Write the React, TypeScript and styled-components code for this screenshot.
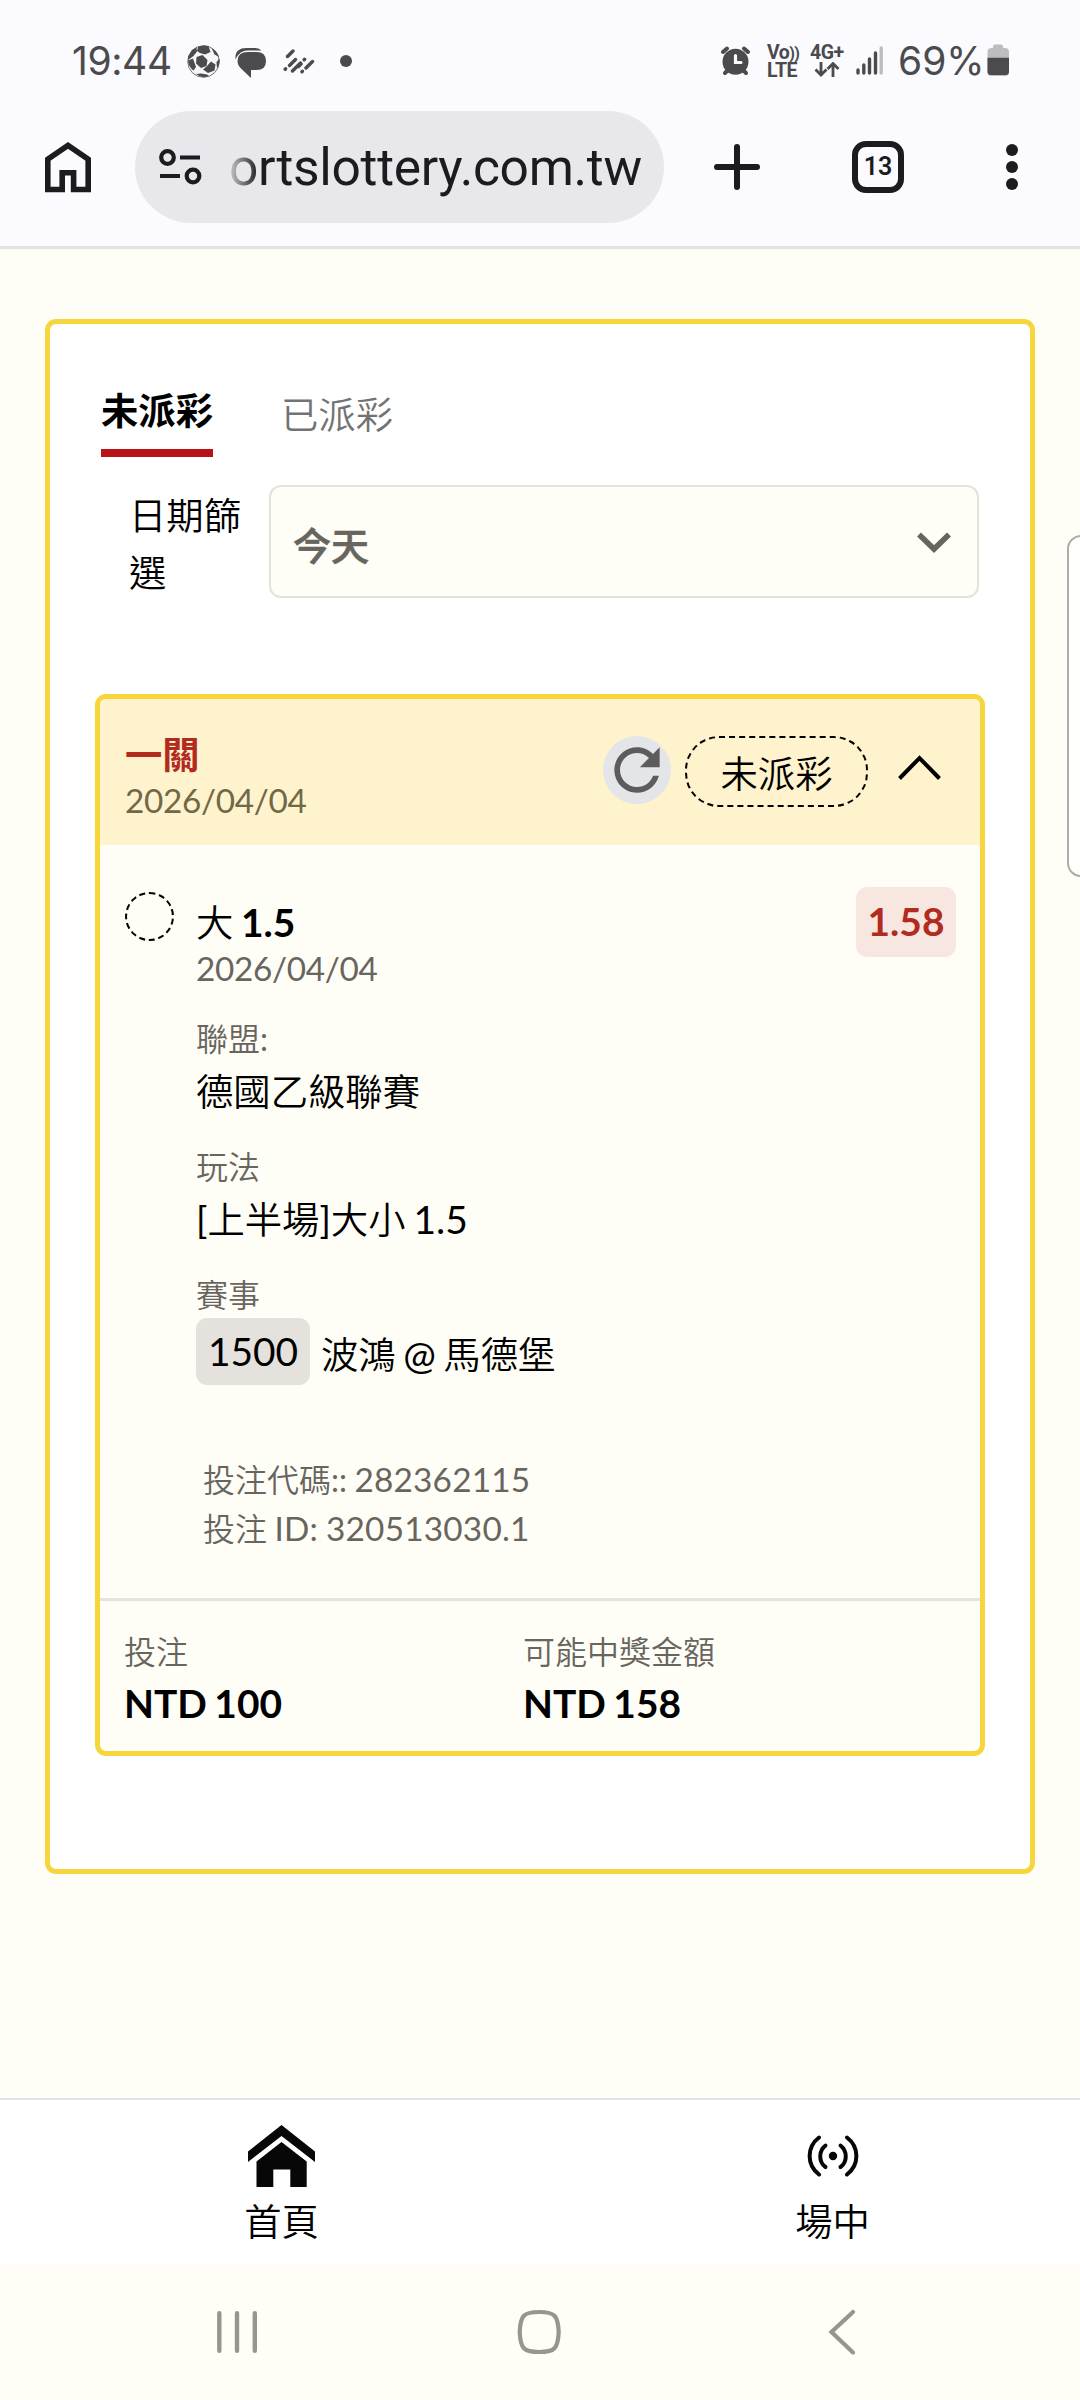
import React from "react";
import styled, { createGlobalStyle, css } from "styled-components";

const color = {
  page: "#fffef6",
  paper: "#ffffff",
  gold: "#f6d63c",
  cream: "#fff3cd",
  ink: "#000000",
  muted: "#68655f",
  red: "#b12b21",
  chrome: "#fafaff",
  chromeInk: "#1b1b20",
  status: "#4b4b4d",
};

const GlobalStyle = createGlobalStyle`
  * { box-sizing: border-box; }
  body {
    margin: 0;
    background: ${color.page};
    color: ${color.ink};
    font-family: Lato, "Noto Sans CJK TC DemiLight", "Noto Sans CJK TC", sans-serif;
    font-size: 37.33px;
  }
  svg { display: block; flex: none; }
`;

const Screen = styled.div`
  position: relative;
  display: flex;
  flex-direction: column;
  width: 1080px;
  height: 2400px;
  overflow: hidden;
`;

/* ---------- browser header ---------- */

const Header = styled.header`
  height: 249px;
  background: ${color.chrome};
  border-bottom: 3px solid #e3e3e5;
`;

const StatusBar = styled.div`
  display: flex;
  align-items: flex-start;
  height: 111px;
  padding: 40px 71px 0 72px;
  color: ${color.status};
  font-family: Roboto, sans-serif;
`;

const StatusText = styled.span<{ $w: number; $spacing?: number }>`
  width: ${(p) => p.$w}px;
  font-family: Inter, sans-serif;
  font-size: 39px;
  line-height: 41px;
  white-space: nowrap;
  letter-spacing: ${(p) => p.$spacing ?? 0}px;
`;

const StatusIcons = styled.div`
  display: flex;
  flex: 1;
`;

const NetworkLabel = styled.div<{ $w: number }>`
  display: flex;
  flex-direction: column;
  width: ${(p) => p.$w}px;
  padding-top: 4px;
  font-size: 19.5px;
  font-weight: 700;
  line-height: 18px;
  letter-spacing: -0.5px;
  white-space: nowrap;
`;

const Waves = styled.span`
  font-size: 16px;
  letter-spacing: -0.6px;
  line-height: 1;
`;

const Toolbar = styled.div`
  display: flex;
  align-items: center;
  height: 112px;
  padding-left: 45px;
  color: ${color.chromeInk};
`;

const AddressBar = styled.div`
  display: flex;
  align-items: center;
  width: 529px;
  height: 112px;
  margin: 0 50px 0 44px;
  padding-left: 24px;
  border-radius: 56px;
  background: #e8e7ec;
`;

const Url = styled.span`
  margin-left: 26px;
  padding-top: 2px;
  font-family: Roboto, sans-serif;
  font-size: 51.5px;
  letter-spacing: -0.3px;
  line-height: 60px;
  white-space: nowrap;
  background: linear-gradient(90deg, #c9c8cd 0, ${color.chromeInk} 30px);
  background-clip: text;
  -webkit-background-clip: text;
  color: transparent;
`;

const TabCount = styled.div`
  display: flex;
  align-items: center;
  justify-content: center;
  width: 52px;
  height: 52px;
  margin: 0 101px 0 92px;
  border: 6px solid ${color.chromeInk};
  border-radius: 14px;
  font: 600 25px/26px Roboto, sans-serif;
`;

/* ---------- bet record panel ---------- */

const Main = styled.main`
  flex: 1;
  padding: 70px 45px 0;
`;

const Panel = styled.section`
  padding: 58px 45px 113px;
  border: 5px solid ${color.gold};
  border-radius: 11px;
  background: ${color.paper};
`;

const Tabs = styled.div`
  display: flex;
  gap: 68px;
  height: 75px;
  padding-left: 6px;
`;

const Tab = styled.div<{ $active?: boolean }>`
  line-height: 56px;
  ${(p) =>
    p.$active
      ? css`
          height: 75px;
          border-bottom: 8px solid #b91318;
          font-family: "Noto Sans CJK TC", sans-serif;
          font-weight: 700;
          line-height: 55px;
        `
      : css`
          padding-top: 5px;
          color: #737373;
        `}
`;

const FilterRow = styled.div`
  display: flex;
  gap: 28px;
  height: 113px;
  margin: 28px 6px 96px 34px;
`;

const FilterLabel = styled.label`
  width: 112px;
  padding-top: 2px;
  line-height: 57px;
`;

const Select = styled.div`
  display: flex;
  flex: 1;
  align-items: center;
  justify-content: space-between;
  padding: 3px 26px 0 22px;
  border: 2px solid #e4e2da;
  border-radius: 12px;
  background: ${color.page};
  color: ${color.muted};
  font-family: "Noto Sans CJK TC Medium", "Noto Sans CJK TC", sans-serif;
  font-size: 38px;
  font-weight: 500;
  -webkit-text-stroke: 0.7px ${color.muted};
`;

const Ticket = styled.article`
  overflow: hidden;
  border: 5px solid ${color.gold};
  border-radius: 11px;
  background: ${color.page};
`;

const TicketHeader = styled.div`
  display: flex;
  justify-content: space-between;
  height: 146px;
  padding: 33px 39px 0 25px;
  background: ${color.cream};
`;

const TicketTitle = styled.div`
  height: 46px;
  color: ${color.red};
  font-family: "Noto Sans CJK TC", sans-serif;
  font-weight: 700;
  line-height: 43px;
`;

const DateText = styled.div`
  color: ${color.muted};
  font-size: 33.3px;
  letter-spacing: -0.3px;
  line-height: 44px;
`;

const HeaderDate = styled(DateText)`
  color: #716847;
`;

const TicketActions = styled.div`
  display: flex;
  align-items: flex-start;
  padding-top: 4px;
`;

const RefreshButton = styled.div`
  width: 68px;
  height: 68px;
  border-radius: 50%;
  background: #e4e5e9;
  color: #5c5c5d;
`;

const StatusPill = styled.div`
  width: 183px;
  height: 71px;
  margin: 0 30px 0 14px;
  padding-top: 3px;
  border: 2px dashed ${color.ink};
  border-radius: 34px;
  text-align: center;
  line-height: 66px;
`;

const ChevronSlot = styled.div`
  padding-top: 19px;
`;

const Selection = styled.div`
  display: flex;
  padding: 47px 24px 45px 25px;
`;

const PendingMark = styled.div`
  width: 49px;
  height: 49px;
  margin-right: 22px;
  border: 2px dashed ${color.ink};
  border-radius: 50%;
`;

const SelectionDetail = styled.div`
  flex: 1;
  padding-top: 7px;
`;

const Pick = styled.div`
  line-height: 47px;
  word-spacing: -2px;
`;

const Num = styled.span<{ $bold?: boolean }>`
  font-size: 1.043em;
  font-weight: ${(p) => (p.$bold ? 700 : 400)};
  line-height: 1;
`;

const Odds = styled.div`
  width: 100px;
  height: 70px;
  margin-top: -5px;
  border-radius: 11px;
  background: #f8e7e0;
  color: ${color.red};
  font-size: 38.9px;
  font-weight: 700;
  line-height: 69px;
  text-align: center;
`;

const Field = styled.div`
  height: 128px;
`;

const Fields = styled.div`
  padding-top: 29px;
`;

const FieldLabel = styled.div`
  color: ${color.muted};
  font-size: 32px;
  line-height: 40px;
`;

const FieldValue = styled.div`
  line-height: 66px;
  word-spacing: -1.5px;
`;

const MatchRow = styled.div`
  display: flex;
  align-items: center;
  gap: 11px;
  height: 67px;
  margin-top: 3px;
`;

const MatchCode = styled.span`
  width: 114px;
  border-radius: 11px;
  background: #e5e2de;
  font-size: 38.9px;
  line-height: 67px;
  text-align: center;
`;

const MatchName = styled.span`
  padding-top: 3px;
  word-spacing: -2px;
`;

const Codes = styled.div`
  margin-top: 52px;
  padding-left: 7px;
  color: ${color.muted};
  font-size: 32px;
  line-height: 49px;
  word-spacing: -0.8px;

  ${Num} {
    letter-spacing: 0.2px;
  }
`;

const TicketFooter = styled.div`
  display: grid;
  grid-template-columns: 399px 1fr;
  padding: 31px 25px 17px 24px;
  border-top: 3px solid #e6e3de;
`;

const Amount = styled.div`
  font-size: 38.9px;
  font-weight: 700;
  line-height: 62px;
  word-spacing: -2px;
`;

const SideHandle = styled.div`
  position: absolute;
  top: 535px;
  right: -20px;
  width: 33px;
  height: 342px;
  border: 2px solid #adada9;
  border-radius: 14px;
  background: #fffffb;
`;

/* ---------- bottom bars ---------- */

const SiteNav = styled.nav`
  display: grid;
  grid-template-columns: 551px 551px;
  height: 166px;
  padding-left: 6px;
  border-top: 2px solid #e3e3e3;
  background: ${color.paper};
`;

const NavItem = styled.a`
  display: flex;
  flex-direction: column;
  align-items: center;
  padding-top: 17px;
  line-height: 56px;
`;

const NavIcon = styled.span`
  display: flex;
  align-items: center;
  height: 77px;
`;

const SystemNav = styled.div`
  display: flex;
  height: 136px;
  padding: 43px 0 0 214px;
  background: #fffdf5;
`;

/* ---------- icons ---------- */

const SoccerIcon = () => (
  <svg width="48" height="46" viewBox="187 40 48 46">
    <circle cx="203.5" cy="61.5" r="15.800" fill="#f6f6f8" stroke="#77777a" strokeWidth="1" />
    <g fill="#4b4b4d">
      <path d="M198 47q5-2.500 10.500-1l2 6-5.500 2.500q-5-.5-8-3.500z" />
      <path d="M196.500 57l6-2 5 5-1 6-5.500 2-5-4.500z" />
      <path d="M211 61.500l4.500 3-1 6-6.500 2.500-5-3.500 4-3.500z" />
      <path d="M188 57l4-7 4.500-2.500.5 4-3.500 4.500-5.500 4zM188 60.500l5-2 3 8.500-2.500 3.500q-5-3.500-5.500-10z" />
      <path d="M196 74l5-.5 6 1 2 1.500q-7 3-13-2zM211.500 48q6 3.500 7.500 9l-4.500-2.500zM216.500 62l3-3.500q.5 6-2.500 10z" />
    </g>
  </svg>
);

const ChatIcon = () => (
  <svg width="48" height="46" viewBox="235 40 48 46" fill="#4b4b4d">
    <path d="M235.500 59.500q-1-11.500 11-11.500h9q4 0 6 2.500h-14q-8 0-12 9z" />
    <path d="M248 52h8.500q9.500 0 9.500 9t-9.500 9h-5.500v8l-10-9.500q-3.500-3.500-3.500-7.500 0-9 10.500-9z" />
  </svg>
);

const WeatherIcon = () => (
  <svg width="57" height="46" viewBox="283 40 57 46" fill="none" stroke="#4b4b4d" strokeWidth="3.400" strokeLinecap="round">
    <path d="M287.500 56.500l5.500-5.500M289.500 65.500l6-6M285.200 69.200l.4-.4M292.500 71l8-8M304.200 59.700l.4-.4M298.500 66.500l2.500-2.500M302 71.700l.4-.4M306 68l6.500-6.500" />
  </svg>
);

const DotIcon = () => (
  <svg width="14" height="46" viewBox="340 40 14 46">
    <circle cx="346" cy="61" r="6" fill="#4b4b4d" />
  </svg>
);

const AlarmIcon = () => (
  <svg width="46" height="46" viewBox="721 40 46 46" fill="none" stroke="#4b4b4d" strokeLinecap="round">
    <circle cx="735.500" cy="61.700" r="13" fill="#4b4b4d" stroke="none" />
    <path d="M723 52l4-3.500M748 52l-4-3.500" strokeWidth="4" />
    <path d="M725 73l3-3M746 73l-3-3" strokeWidth="4" />
    <path d="M735.500 55.500v7h5.500" stroke="#fafaff" strokeWidth="3.200" />
  </svg>
);

const DataArrows = () => (
  <svg width="34" height="15" viewBox="-4 0 34 15" fill="none" stroke="#4b4b4d" strokeWidth="2.800">
    <path d="M7 0v13M1.500 7.500L7 13l5.500-5.500M19 15V1.500M13.500 7L19 1.500 24.500 7" />
  </svg>
);

const SignalIcon = () => (
  <svg width="42" height="46" viewBox="856 40 42 46" fill="none" stroke="#4b4b4d" strokeWidth="3.400" strokeLinecap="round">
    <path d="M858 70v3M863.800 65v8M869.500 59v14M875.500 53v20" />
    <path d="M881.200 48v25" stroke="#bdbdc0" />
  </svg>
);

const BatteryIcon = () => (
  <svg width="22" height="46" viewBox="987.500 40 22 46">
    <path d="M993.500 48v-1.500q0-2 2-2h6q2 0 2 2v1.500h2q4 0 4 4v20q0 4-4 4h-13.500q-4 0-4-4v-20q0-4 4-4z" fill="#bdbdc0" />
    <path d="M988 57.700h21.500v13.800q0 3.500-3.500 3.500h-14.500q-3.500 0-3.500-3.500z" fill="#4b4b4d" />
  </svg>
);

const HomeOutlineIcon = () => (
  <svg width="46" height="51" viewBox="0 0 46 51" fill="none" stroke="currentColor" strokeWidth="5.600">
    <path d="M2.800 47.500V17.200L23 3.400l20.200 13.800V47.500H28.600V30.800H17.200V47.500z" />
  </svg>
);

const TuneIcon = () => (
  <svg width="44" height="38" viewBox="0 0 44 38" fill="none" stroke="currentColor" strokeWidth="4.200">
    <circle cx="8.500" cy="9.500" r="6.300" />
    <path d="M21 9.500h20M1 28h20" />
    <circle cx="34" cy="28" r="6.300" />
  </svg>
);

const PlusIcon = () => (
  <svg width="46" height="46" viewBox="0 0 46 46" stroke="currentColor" strokeWidth="6" strokeLinecap="round">
    <path d="M23 3v40M3 23h40" />
  </svg>
);

const MoreIcon = () => (
  <svg width="14" height="50" viewBox="0 0 14 50" fill="currentColor">
    <circle cx="7" cy="8" r="6" />
    <circle cx="7" cy="25" r="6" />
    <circle cx="7" cy="42" r="6" />
  </svg>
);

const ChevronDown = () => (
  <svg width="34" height="22" viewBox="0 0 34 22" fill="none" stroke="currentColor" strokeWidth="5.600">
    <path d="M2 2.500l15 14.500 15-14.500" />
  </svg>
);

const ChevronUp = () => (
  <svg width="43" height="26" viewBox="0 0 43 26" fill="none" stroke="#000" strokeWidth="4">
    <path d="M1.500 23.500l20-20.500 20 20.500" />
  </svg>
);

const RefreshIcon = () => (
  <svg width="68" height="68" viewBox="0 0 24 24" fill="currentColor">
    <path d="M17.650 6.350C16.200 4.900 14.210 4 12 4c-4.420 0-7.990 3.580-7.990 8s3.570 8 7.990 8c3.730 0 6.840-2.550 7.730-6h-2.080c-.82 2.330-3.040 4-5.650 4-3.310 0-6-2.690-6-6s2.690-6 6-6c1.660 0 3.140.69 4.220 1.780L13 11h7V4l-2.350 2.350z" />
  </svg>
);

const HomeFilledIcon = () => (
  <svg width="67" height="62" viewBox="0 0 67 62" fill="#070707">
    <path d="M33.500 0L67 26.500v10.500L33.500 11 0 37V26.500z" />
    <path d="M33.500 17L58.700 36.500V62H42.300V44.500H25.300V62H8.500V36.500z" />
  </svg>
);

const LiveIcon = () => (
  <svg width="52" height="42" viewBox="0 0 52 42" fill="none" stroke="#070707" strokeWidth="4" strokeLinecap="round">
    <path d="M12 2.500C-.5 12-.5 30 12 39.500M40 2.500C52.500 12 52.500 30 40 39.500" />
    <path d="M18.500 10.500C11.500 16 11.500 27 18.500 32M33.500 10.500C40.500 16 40.500 27 33.500 32" />
    <circle cx="26" cy="21" r="4.200" fill="#070707" stroke="none" />
  </svg>
);

const RecentsIcon = () => (
  <svg width="300" height="50" viewBox="214 0 300 50" fill="none" stroke="#979590" strokeWidth="4.400" strokeLinecap="round">
    <path d="M219.300 6.300v37.500M237 6.300v37.500M254.800 6.300v37.500" />
  </svg>
);

const SystemHomeIcon = () => (
  <svg width="312" height="50" viewBox="514 0 312 50" fill="none" stroke="#979590" strokeWidth="4.200">
    <path d="M539.200 5q12 0 15.500 4t4 16q-.5 12-4 16t-15.500 4q-12 0-15.500-4t-4-16q.5-12 4-16t15.500-4z" />
  </svg>
);

const BackIcon = () => (
  <svg width="34" height="50" viewBox="826 0 34 50" fill="none" stroke="#979590" strokeWidth="4.200" strokeLinecap="round">
    <path d="M853 5l-21.500 20L853 45.500" />
  </svg>
);

/* ---------- page ---------- */

export default function App() {
  return (
    <Screen>
      <GlobalStyle />
      <Header>
        <StatusBar>
          <StatusText $w={115} $spacing={-0.4}>
            19:44
          </StatusText>
          <StatusIcons>
            <SoccerIcon />
            <ChatIcon />
            <WeatherIcon />
            <DotIcon />
          </StatusIcons>
          <AlarmIcon />
          <NetworkLabel $w={43}>
            <span>
              Vo<Waves>))</Waves>
            </span>
            <span>LTE</span>
          </NetworkLabel>
          <NetworkLabel $w={46}>
            4G+
            <DataArrows />
          </NetworkLabel>
          <SignalIcon />
          <StatusText $w={89}>69%</StatusText>
          <BatteryIcon />
        </StatusBar>
        <Toolbar>
          <HomeOutlineIcon />
          <AddressBar>
            <TuneIcon />
            <Url>ortslottery.com.tw</Url>
          </AddressBar>
          <PlusIcon />
          <TabCount>13</TabCount>
          <MoreIcon />
        </Toolbar>
      </Header>

      <Main>
        <Panel>
          <Tabs>
            <Tab $active>未派彩</Tab>
            <Tab>已派彩</Tab>
          </Tabs>
          <FilterRow>
            <FilterLabel>日期篩選</FilterLabel>
            <Select>
              今天
              <ChevronDown />
            </Select>
          </FilterRow>

          <Ticket>
            <TicketHeader>
              <div>
                <TicketTitle>一關</TicketTitle>
                <HeaderDate>2026/04/04</HeaderDate>
              </div>
              <TicketActions>
                <RefreshButton>
                  <RefreshIcon />
                </RefreshButton>
                <StatusPill>未派彩</StatusPill>
                <ChevronSlot>
                  <ChevronUp />
                </ChevronSlot>
              </TicketActions>
            </TicketHeader>

            <Selection>
              <PendingMark />
              <SelectionDetail>
                <Pick>
                  大 <Num $bold>1.5</Num>
                </Pick>
                <DateText>2026/04/04</DateText>
                <Fields>
                  <Field>
                    <FieldLabel>聯盟:</FieldLabel>
                    <FieldValue>德國乙級聯賽</FieldValue>
                  </Field>
                  <Field>
                    <FieldLabel>玩法</FieldLabel>
                    <FieldValue>
                      [上半場]大小 <Num>1.5</Num>
                    </FieldValue>
                  </Field>
                  <Field>
                    <FieldLabel>賽事</FieldLabel>
                    <MatchRow>
                      <MatchCode>1500</MatchCode>
                      <MatchName>
                        波鴻 <Num>@</Num> 馬德堡
                      </MatchName>
                    </MatchRow>
                  </Field>
                </Fields>
                <Codes>
                  <div>
                    投注代碼:: <Num>282362115</Num>
                  </div>
                  <div>
                    投注 <Num>ID: 320513030.1</Num>
                  </div>
                </Codes>
              </SelectionDetail>
              <Odds>1.58</Odds>
            </Selection>

            <TicketFooter>
              <div>
                <FieldLabel>投注</FieldLabel>
                <Amount>NTD 100</Amount>
              </div>
              <div>
                <FieldLabel>可能中獎金額</FieldLabel>
                <Amount>NTD 158</Amount>
              </div>
            </TicketFooter>
          </Ticket>
        </Panel>
      </Main>

      <SiteNav>
        <NavItem>
          <NavIcon>
            <HomeFilledIcon />
          </NavIcon>
          首頁
        </NavItem>
        <NavItem>
          <NavIcon>
            <LiveIcon />
          </NavIcon>
          場中
        </NavItem>
      </SiteNav>

      <SystemNav>
        <RecentsIcon />
        <SystemHomeIcon />
        <BackIcon />
      </SystemNav>

      <SideHandle />
    </Screen>
  );
}
